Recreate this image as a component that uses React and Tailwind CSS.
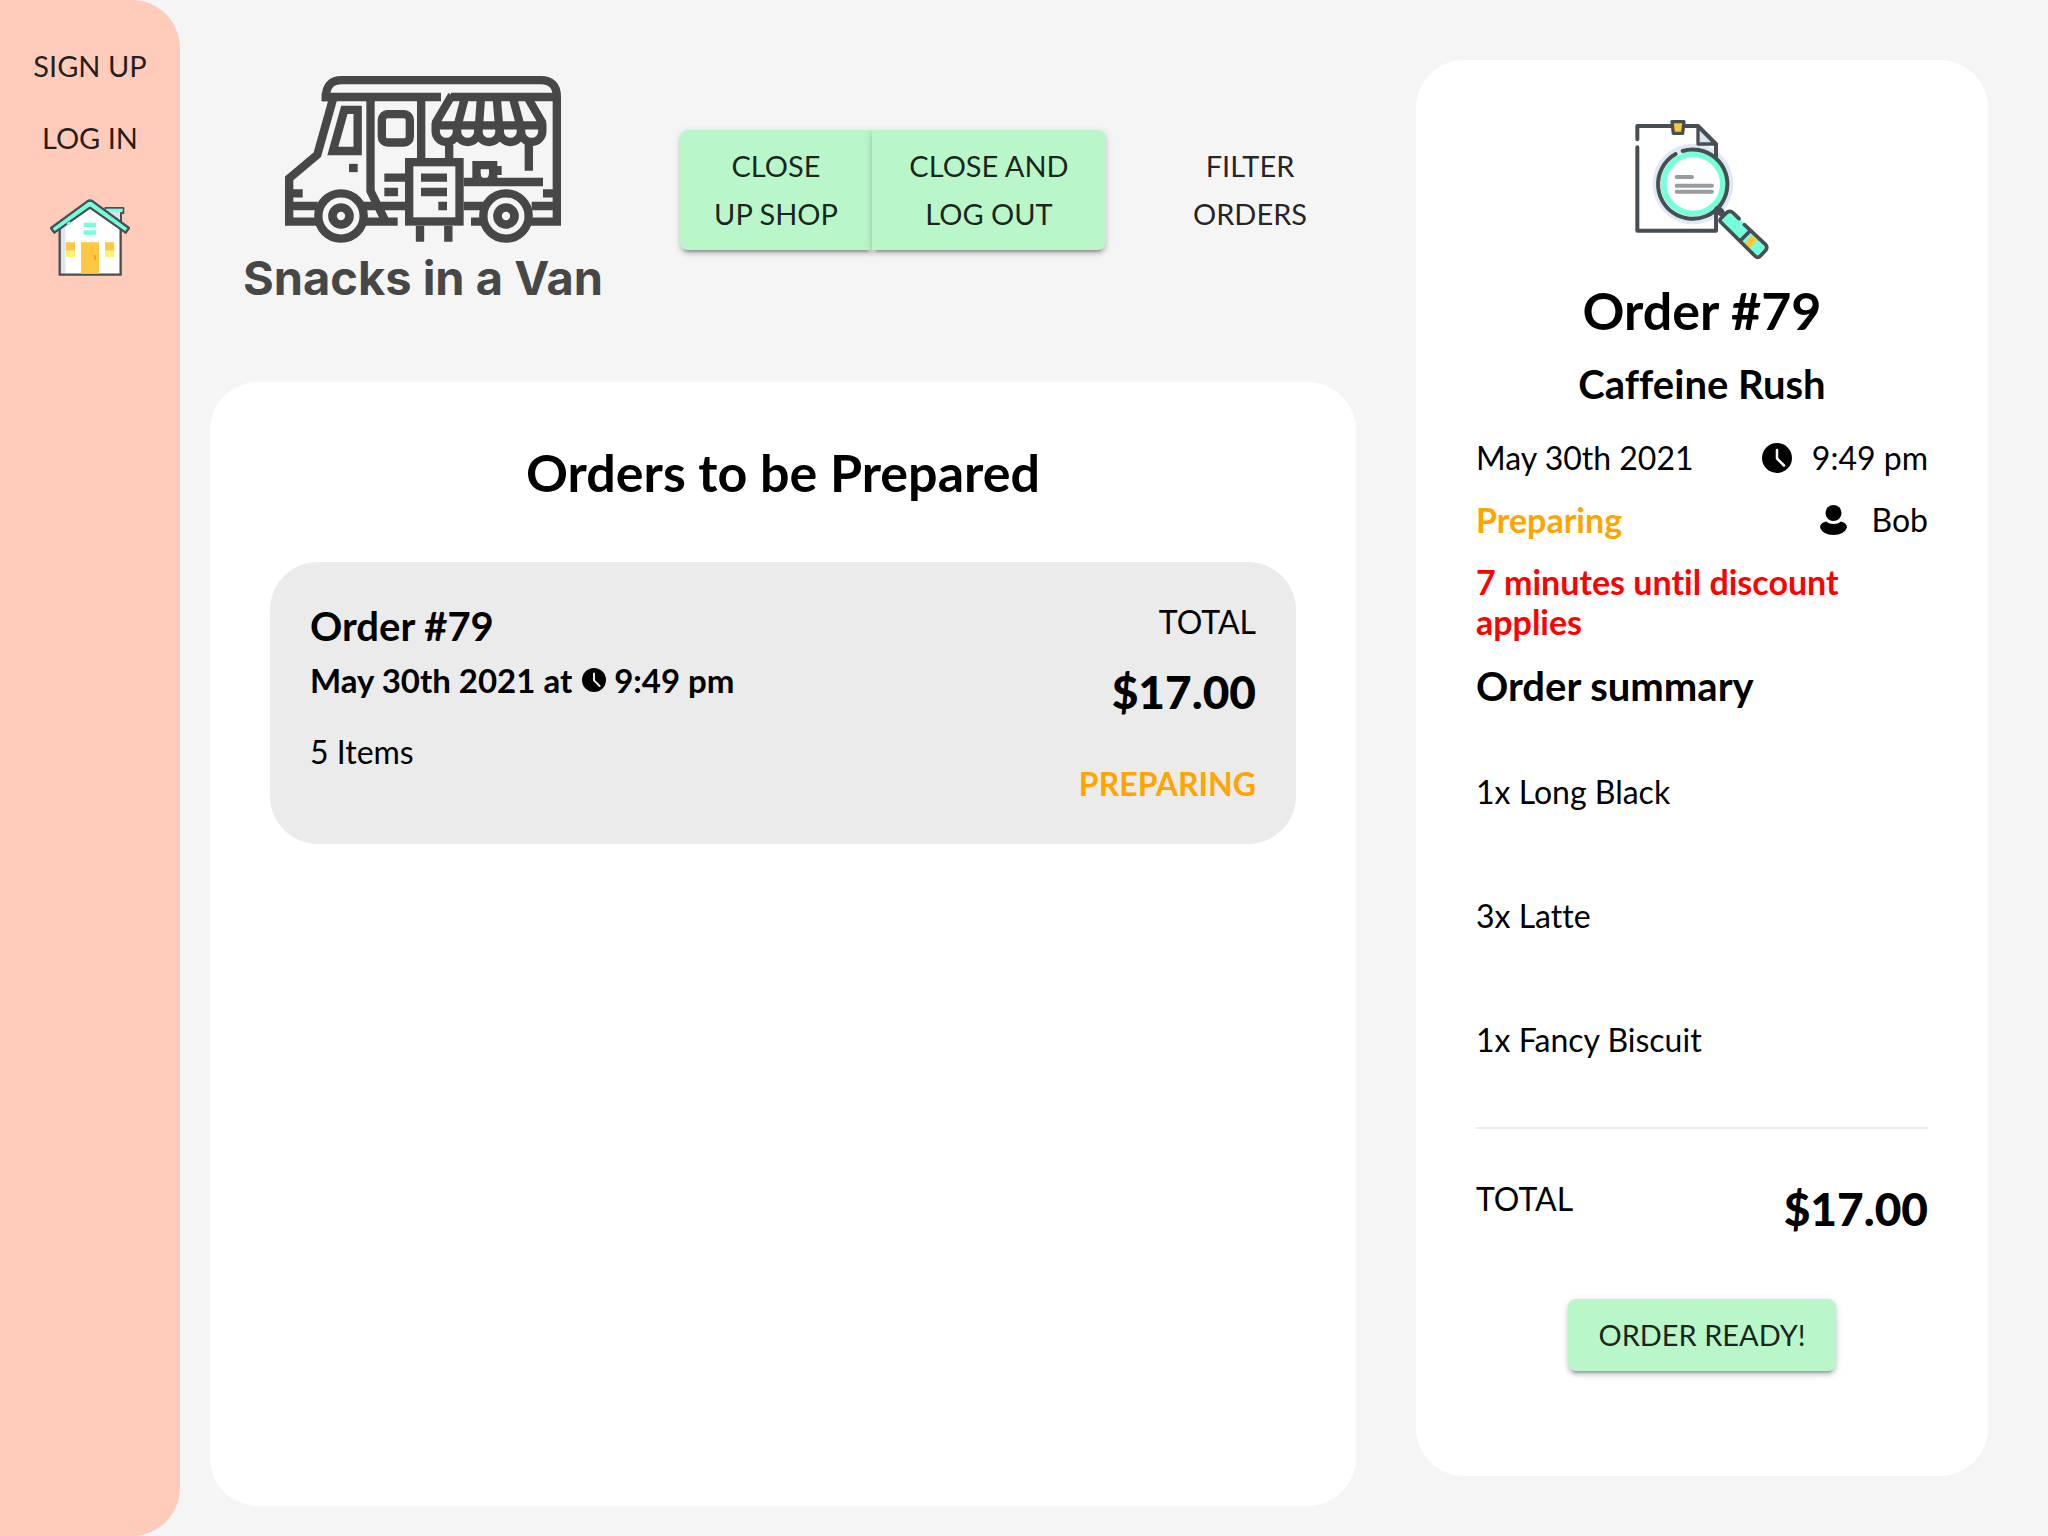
const AWNING_CUPS = [646, 710, 774, 838, 902];

function VanLogo() {
  return (
    <svg viewBox="162 48 828 500" className="mt-2 w-[276px]" fill="none" stroke="#474747" strokeWidth="25" aria-hidden="true">
      <path d="M285 124V110Q285 60.5 333 60.5H928Q977.5 60.5 977.5 110V485H898" />
      <path d="M272 111H630M660 111H977" />
      <path d="M306 117L259 284L174.500 355V485H262" />
      <path d="M186 438H260M186 400H215M936 400H966M902 438H966" />
      <circle cx="330" cy="468" r="68" />
      <circle cx="825" cy="468" r="68" />
      <circle cx="330" cy="468" r="25.500" strokeWidth="26" />
      <circle cx="825" cy="468" r="25.500" strokeWidth="26" />
      <path d="M418.500 111V393L464 485M398 485H500M398 438H522M698 438H758M720 485H752" />
      <path d="M340 149.500H380V273H305.500Z" />
      <path d="M354 324H380" />
      <rect x="452.500" y="162.500" width="84" height="85" rx="17" />
      <path d="M570.500 111V300" />
      <rect x="534.500" y="306.500" width="151" height="178" />
      <path d="M567 497V545M652 497V545M570 353H648M570 396H648M622 438H648M460 353H522M460 396H501" />
      <path d="M654.500 255V300M893.500 250V332M698 366H936" />
      <path d="M663 105L613 190M702 111L680 196M750 111L744 196M797 111L804 196M845 111L868 196M889 111L935 190M603 196H945" />
      {AWNING_CUPS.map((x) => (
        <path key={x} d={`M${x - 32} 188V214a32 32 0 0 0 64 0V188`} />
      ))}
      <path d="M724 303H799V318H812V345H799V355H768Q774 350 774 340V328H749V340Q749 350 755 355H724Z" fill="#474747" stroke="none" />
    </svg>
  );
}

function HouseIcon() {
  return (
    <svg viewBox="150 598 240 232" className="w-20" aria-hidden="true">
      <path d="M316 625H370V640H363V674L330 650Z" fill="#dbe2f0" stroke="#474f54" strokeWidth="6" strokeLinejoin="round" />
      <path d="M318 631H368" stroke="#77ffdb" strokeWidth="8" />
      <path d="M179 825V680L270 614L361 680V825Z" fill="#fff" />
      <path d="M182 680L196 670V823H182Z" fill="#dde4f3" />
      <path d="M179 686V825H362V686" fill="none" stroke="#474f54" strokeWidth="7" strokeLinejoin="round" />
      <path d="M153 685L262 605Q270 600 278 605L387 685L377 699L270 624L163 699Z" fill="#77ffdb" stroke="#474f54" strokeWidth="7" strokeLinejoin="round" />
      <path d="M202 675L211 668" stroke="#77ffdb" strokeWidth="8" />
      <path d="M251 669H288V682H251ZM251 692H288V705H251Z" fill="#77ffdb" />
      <path d="M243 728H297V822H243ZM197 728H225V753H197ZM315 728H343V753H315Z" fill="#ffc843" />
      <path d="M197 753H225V772H197ZM315 753H343V772H315Z" fill="#fff36d" />
      <rect x="281" y="765" width="7" height="16" rx="3" fill="#ff9f22" />
    </svg>
  );
}

function OrderSearchIcon() {
  return (
    <svg viewBox="104 60 402 420" className="h-[140px]" fill="none" stroke="#474f54" strokeWidth="12" strokeLinecap="round" strokeLinejoin="round" aria-hidden="true">
      <circle cx="278" cy="252" r="121" fill="#e0e8f6" stroke="none" />
      <path d="M111 118V78H293L347 132V170M111 142V392H347V335" />
      <path d="M293 80V132H345Z" fill="#dbe4f5" strokeWidth="10" />
      <path d="M215 65H251L247 100H219Z" fill="#ffc53e" strokeWidth="10" />
      <circle cx="279" cy="252" r="100" fill="#fff" stroke="none" />
      <circle cx="279" cy="252" r="89" stroke="#77ffdb" strokeWidth="18" />
      <path d="M226 162A104 104 0 1 0 247 153" />
      <path d="M229 231H275M229 257H335M229 275H335" stroke="#979da1" />
      <path d="M353 328L362 337" strokeWidth="22" />
      <path d="M362 358L384 337Q391 331 399 338L496 435Q503 443 496 450L480 468Q472 476 464 468L362 366Q358 362 362 358Z" fill="#77ffdb" stroke="none" />
      <path d="M455 405L470 421L448 445L433 430Z" fill="#ffc53e" stroke="none" />
      <path d="M416 356L399 339Q387 328 376 341L361 356Q357 361 361 366L464 468Q472 476 480 468L495 452Q503 443 496 434L432 374M446 396L420 422" strokeWidth="11" />
    </svg>
  );
}

function ClockIcon({ className, hand }) {
  return (
    <svg viewBox="0 0 30 30" className={className} fill="none" aria-hidden="true">
      <circle cx="15" cy="15" r="15" fill="#000" />
      <path d="M15 7V15.500L22 22.500" stroke={hand} strokeWidth="2.500" strokeLinecap="round" strokeLinejoin="round" />
    </svg>
  );
}

function PersonIcon() {
  return (
    <svg viewBox="0 0 27 30" className="w-[27px]" aria-hidden="true">
      <circle cx="13.500" cy="8" r="8" />
      <path d="M6 16.500Q9 19 13.500 19Q18 19 21 16.500Q27 18 27 22.500Q24 30 13.500 30Q3 30 0 22.500Q0 18 6 16.500Z" />
    </svg>
  );
}

const RAISED = "bg-[#b9f6ca] shadow-[0_6px_2px_-4px_rgba(0,0,0,0.2),0_4px_4px_rgba(0,0,0,0.14),0_2px_10px_rgba(0,0,0,0.12)]";

const ITEMS = ["1x Long Black", "3x Latte", "1x Fancy Biscuit"];

export default function App() {
  return (
    <div className="flex min-h-screen bg-[#f5f5f5] font-['Lato',sans-serif] text-[32px] leading-10 text-black [font-variant-ligatures:none]">
      <nav className="flex w-[180px] shrink-0 flex-col items-center rounded-r-[48px] bg-[#ffccbc] pt-[30px] text-[29px] text-black/87">
        <a href="#signup" className="leading-[72px]">SIGN UP</a>
        <a href="#login" className="leading-[72px]">LOG IN</a>
        <a href="#home" aria-label="Home" className="mt-[25px]"><HouseIcon /></a>
      </nav>

      <main className="flex flex-1 flex-col px-[30px] pb-[30px]">
        <header className="flex items-center gap-11 pt-[68px] pb-[70px]">
          <div className="flex flex-1 flex-col items-center">
            <VanLogo />
            <div className="font-['Inter',sans-serif] text-[47px] leading-[69px] font-bold whitespace-nowrap text-[#474747]">Snacks in a Van</div>
          </div>
          <div className="flex text-[29px] leading-12 text-black/87">
            <button className={`w-[192px] rounded-l-lg py-3 ${RAISED}`}>CLOSE<br />UP SHOP</button>
            <button className={`w-[234px] rounded-r-lg py-3 ${RAISED}`}>CLOSE AND<br />LOG OUT</button>
            <button className="ml-[38px] w-[212px] py-3">FILTER<br />ORDERS</button>
          </div>
        </header>

        <section className="flex-1 rounded-[48px] bg-white px-[60px] pt-[60px]">
          <h1 className="text-center text-[52px] leading-[60px] font-bold">Orders to be Prepared</h1>
          <article className="mt-[60px] flex justify-between rounded-[48px] bg-[#ebebeb] px-10 py-10">
            <div>
              <h2 className="text-[40px] leading-12 font-bold">Order #79</h2>
              <p className="mt-2.5 flex items-center text-[33px] font-bold">
                May 30th 2021 at
                <ClockIcon className="mr-2 ml-2.5 w-6" hand="#ebebeb" />
                9:49 pm
              </p>
              <p className="mt-8">5 Items</p>
            </div>
            <div className="text-right">
              <p>TOTAL</p>
              <p className="mt-5 text-[46px] leading-[60px] font-black">$17.00</p>
              <p className="mt-[42px] font-bold text-[#ffa500]">PREPARING</p>
            </div>
          </article>
        </section>
      </main>

      <aside className="my-[60px] mr-[60px] ml-[30px] flex w-[572px] shrink-0 flex-col rounded-[48px] bg-white px-[60px] pt-[60px]">
        <div className="flex justify-center"><OrderSearchIcon /></div>
        <h1 className="mt-5 text-center text-[52px] leading-[60px] font-bold">Order #79</h1>
        <h2 className="mt-5 text-center text-[40px] leading-12 font-bold">Caffeine Rush</h2>
        <div className="mt-[30px] flex justify-between">
          <span>May 30th 2021</span>
          <span className="flex items-center gap-5"><ClockIcon className="w-[30px]" hand="#fff" />9:49 pm</span>
        </div>
        <div className="mt-[22px] flex justify-between">
          <span className="text-[34px] font-bold text-[#ffa500]">Preparing</span>
          <span className="flex items-center gap-6"><PersonIcon />Bob</span>
        </div>
        <p className="mt-[22px] text-[34px] font-bold text-[#ff0000]">7 minutes until discount applies</p>
        <h3 className="mt-5 text-[40px] leading-12 font-bold">Order summary</h3>
        <ul className="mt-[62px] flex flex-col gap-[84px]">
          {ITEMS.map((item) => <li key={item}>{item}</li>)}
        </ul>
        <hr className="mt-[67px] border-t-2 border-[#ebebeb]" />
        <div className="mt-[50px] flex justify-between">
          <span>TOTAL</span>
          <span className="text-[46px] leading-[60px] font-black">$17.00</span>
        </div>
        <button className={`mt-[60px] mb-[60px] self-center rounded-lg px-[30px] py-3 text-[29px] leading-12 text-black/87 ${RAISED}`}>ORDER READY!</button>
      </aside>
    </div>
  );
}
